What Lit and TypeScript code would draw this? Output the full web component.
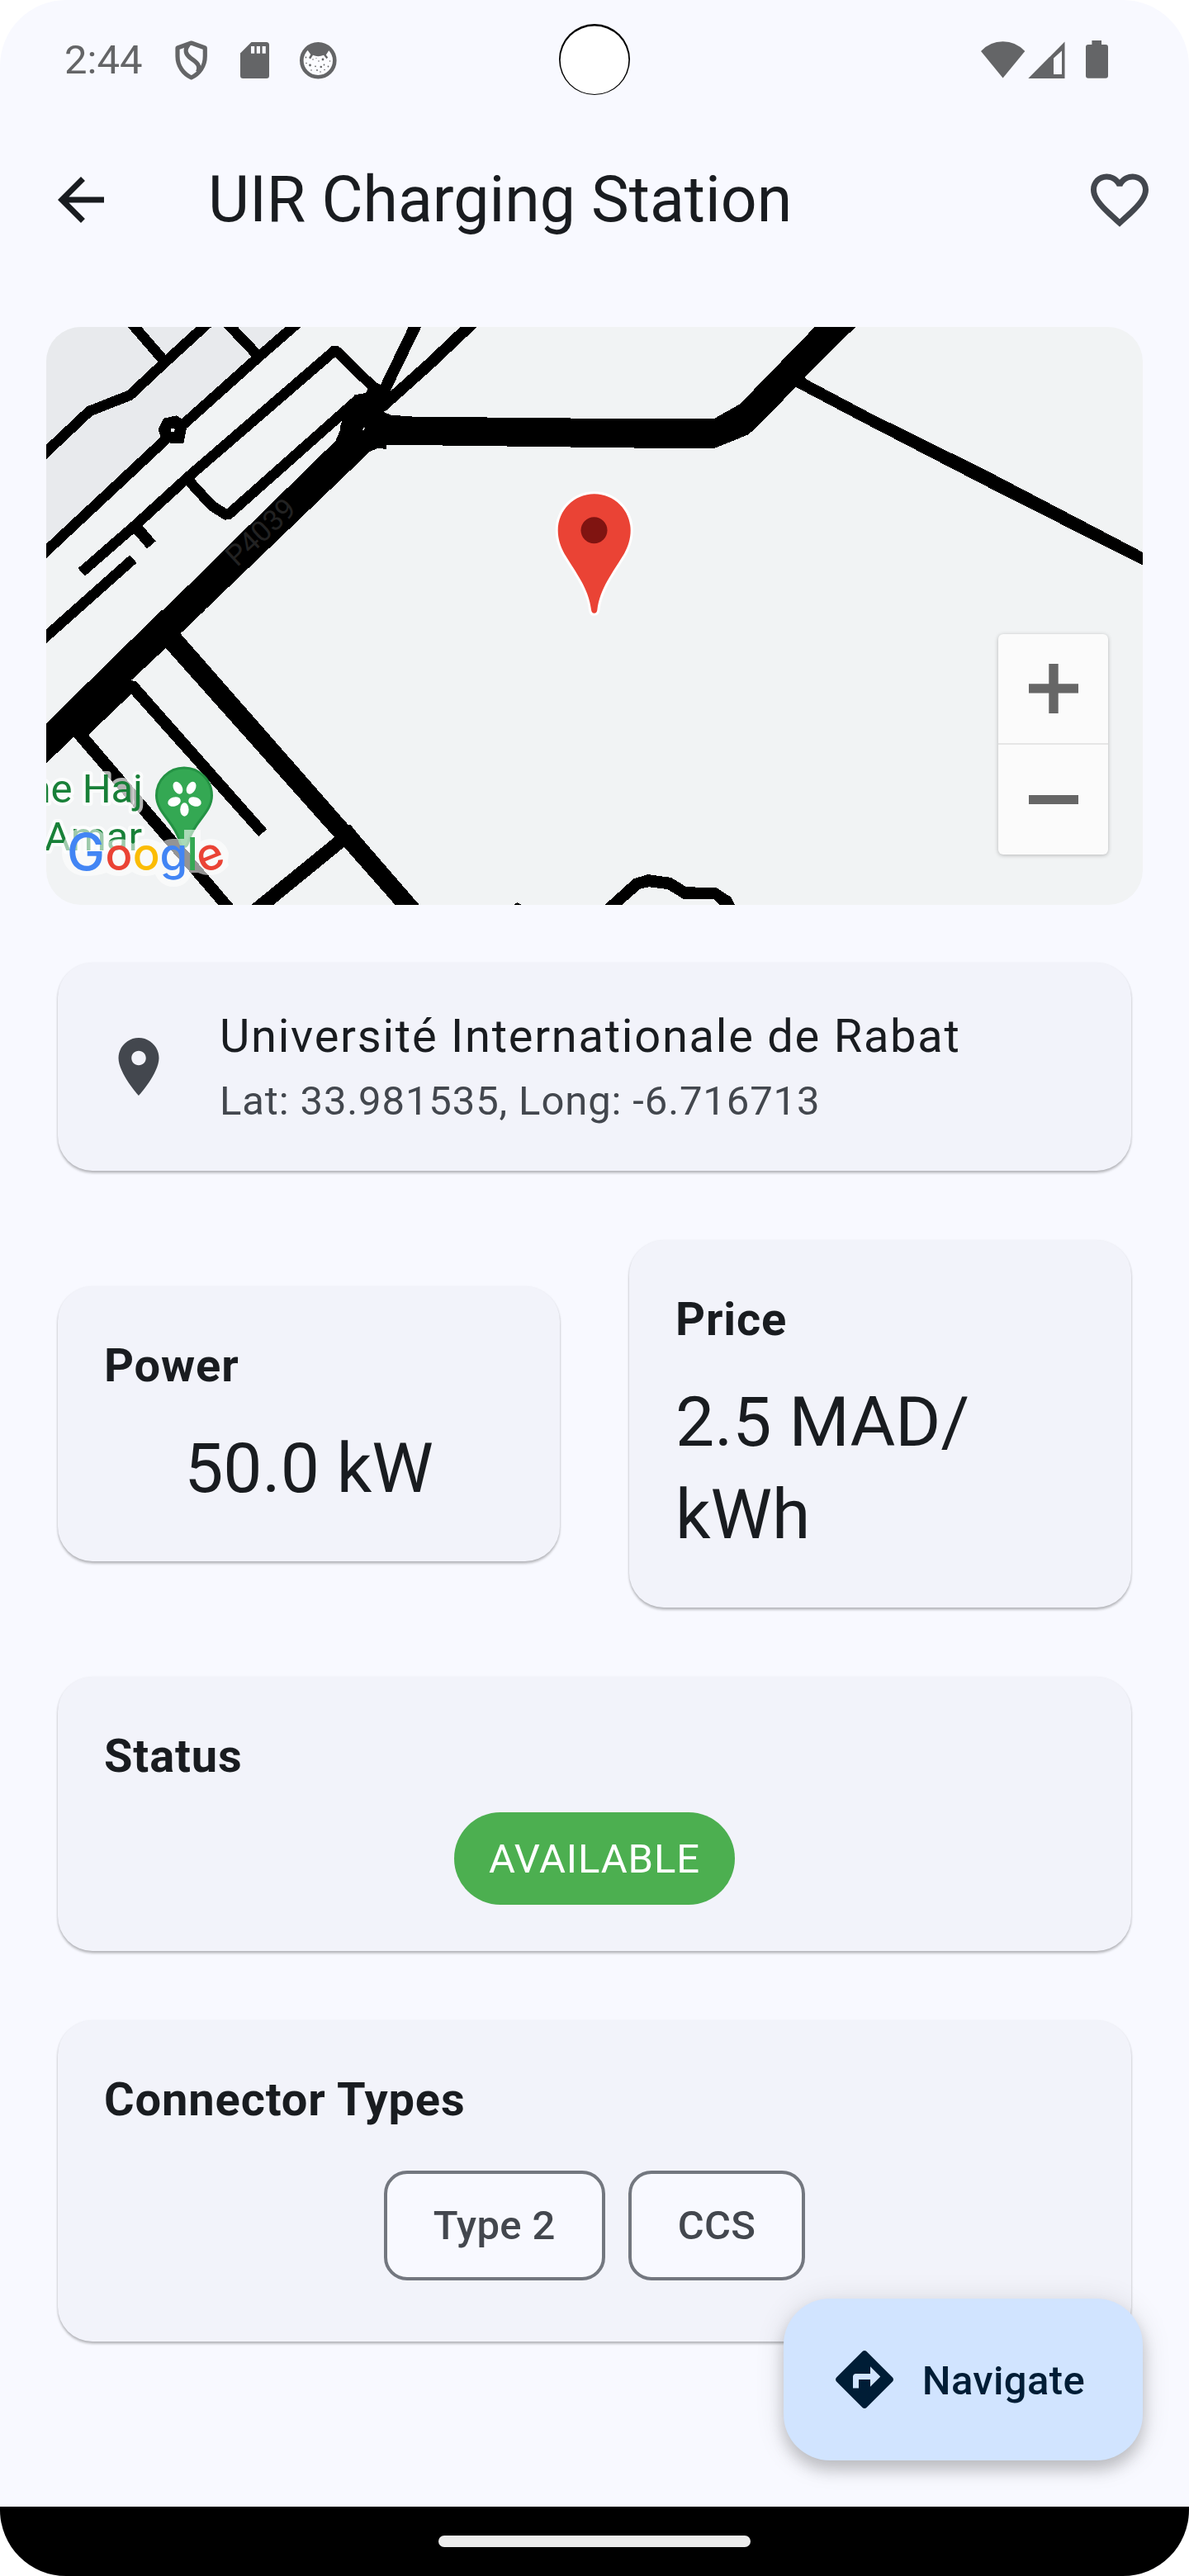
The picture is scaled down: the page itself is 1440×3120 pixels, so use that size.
import { LitElement, html, css } from "lit";
import { customElement, property } from "lit/decorators.js";

const base = css`
  :host {
    display: block;
    box-sizing: border-box;
  }
  *,
  *::before,
  *::after {
    box-sizing: border-box;
  }
  svg {
    display: block;
    flex: none;
  }
`;

@customElement("status-bar")
class StatusBar extends LitElement {
  static styles = [
    base,
    css`
      :host {
        position: relative;
        height: 144px;
      }
      .bar {
        display: flex;
        align-items: center;
        height: 144px;
        padding: 2px 98px 0 78px;
        color: #646567;
      }
      .clock {
        width: 130px;
        font-size: 49px;
        line-height: 58px;
        white-space: nowrap;
      }
      .spacer {
        flex: 1;
      }
      .camera {
        position: absolute;
        left: 677px;
        top: 29px;
      }
    `,
  ];
  render() {
    return html`
      <div class="bar">
        <span class="clock">2:44</span>
        <svg width="200" height="56" viewBox="208 45 200 56" fill="#646567">
          <g fill="none" stroke="#646567" stroke-width="5.2" stroke-linejoin="round">
            <path d="M231.7 52 L248.3 58 V68 C248.3 80.500 241 89.500 231.700 94 C222.400 89.500 215 80.500 215 68 V58 Z" />
            <path d="M228.500 54 C223 60 224.500 66 231 70.500 C239 76 243 79.500 239.500 87" />
          </g>
          <path d="M304.500 51 H322.500 Q326 51 326 54.500 V91.700 Q326 95 322.700 95 H294.300 Q291 95 291 91.700 V64.500 Z" />
          <path d="M304 56h4.200v8.700H304zM310.800 56h4.200v8.700h-4.200zM317.600 56h4.200v8.700h-4.200z" fill="#f8f9ff" />
          <circle cx="385.300" cy="73.300" r="20" fill="#fbfcff" stroke="#646567" stroke-width="4.600" />
          <path d="M372 60 Q378 53 385.300 53 Q392.500 53 399 60 L394.800 66.500 L397.200 69.500 L395.500 71.300 L392 66.800 Q385.300 69.500 379 66.800 L376 71.500 L374 70 L376.300 66 Z" />
          <g>
            <circle cx="375.500" cy="79" r="1.400" /><circle cx="391" cy="72" r="1.400" />
            <circle cx="388.800" cy="81" r="1.300" /><circle cx="382" cy="80.300" r=".9" />
            <circle cx="386" cy="74" r=".8" /><circle cx="379" cy="72" r=".8" />
            <circle cx="392.500" cy="78.500" r=".9" /><circle cx="384" cy="85" r=".9" />
            <circle cx="377" cy="85" r=".8" /><circle cx="388" cy="87" r=".8" />
            <circle cx="370.500" cy="69.500" r=".9" /><circle cx="371" cy="76.500" r=".8" />
            <circle cx="397.500" cy="80.500" r=".9" /><circle cx="399.500" cy="74" r=".8" />
            <circle cx="393" cy="84.500" r=".8" /><circle cx="383" cy="70.500" r=".6" />
          </g>
        </svg>
        <span class="spacer"></span>
        <svg width="156" height="56" viewBox="1186 45 156 56" fill="#646567">
          <path d="M1188 62 Q1199 50.300 1214.600 50.300 Q1230.200 50.300 1241.300 62 L1214.600 94.500 Z" />
          <path d="M1289.500 50.500 V95 H1245.300 Z" />
          <path d="M1286 61.500 V90 H1276 V70.500 Z" fill="#f8f9ff" />
          <path d="M1322.400 49 h11.600 v5 h5 q3 0 3 3 v34.700 q0 3 -3 3 h-21 q-3 0 -3 -3 V57 q0 -3 3 -3 h4.400 Z" />
        </svg>
      </div>
      <svg class="camera" width="86" height="86" viewBox="0 0 86 86">
        <circle cx="43" cy="43" r="43" fill="#000" />
        <circle cx="43" cy="43.800" r="41.300" fill="#fff" />
      </svg>
    `;
  }
}

@customElement("app-header")
class AppHeader extends LitElement {
  static styles = [
    base,
    css`
      .row {
        display: flex;
        align-items: center;
        height: 196px;
        padding: 0 42px 0 56px;
      }
      h1 {
        flex: 1;
        margin: 0 0 0 112px;
        font-size: 77px;
        line-height: 98px;
        font-weight: 400;
        color: #191c20;
        white-space: nowrap;
      }
    `,
  ];
  @property() heading = "";
  render() {
    return html`
      <div class="row">
        <svg width="84" height="84" viewBox="0 0 24 24" fill="#191c20">
          <path d="M20 11H7.83l5.59-5.59L12 4l-8 8 8 8 1.410-1.410L7.830 13H20v-2z" />
        </svg>
        <h1>${this.heading}</h1>
        <svg width="84" height="84" viewBox="0 0 24 24" fill="#43474e">
          <path
            d="M16.500 3c-1.740 0-3.410.810-4.500 2.090C10.910 3.810 9.240 3 7.500 3 4.420 3 2 5.420 2 8.500c0 3.780 3.400 6.860 8.550 11.540L12 21.350l1.450-1.320C18.600 15.360 22 12.280 22 8.500 22 5.420 19.580 3 16.500 3zm-4.400 15.550l-.1.100-.1-.1C7.140 14.240 4 11.390 4 8.500 4 6.500 5.500 5 7.500 5c1.540 0 3.040.990 3.570 2.360h1.870C13.460 5.990 14.960 5 16.500 5c2 0 3.500 1.500 3.500 3.500 0 2.890-3.140 5.740-7.900 10.050z"
          />
        </svg>
      </div>
    `;
  }
}

@customElement("station-map")
class StationMap extends LitElement {
  static styles = [
    base,
    css`
      :host {
        position: relative;
        height: 700px;
        border-radius: 42px;
        overflow: hidden;
        background: #f1f3f4;
      }
      text {
        font-family: Roboto, sans-serif;
      }
      .label text {
        paint-order: stroke;
        stroke: rgba(255, 255, 255, 0.7);
        stroke-width: 8px;
        stroke-linejoin: round;
      }
      .logo text {
        font-family: Inter, Roboto, sans-serif;
        font-weight: 500;
      }
      .zoom {
        position: absolute;
        right: 42px;
        bottom: 61px;
        width: 133px;
        height: 267px;
        display: flex;
        flex-direction: column;
        border-radius: 6px;
        background: #fbfbfb;
        box-shadow: 0 1px 5px rgba(0, 0, 0, 0.25);
      }
      .zoom div {
        flex: 1;
        display: flex;
        align-items: center;
        justify-content: center;
      }
      .zoom div:first-child {
        flex: 0 0 132px;
      }
      .zoom div + div {
        border-top: 2px solid #e6e6e6;
        padding-bottom: 1px;
      }
    `,
  ];
  render() {
    return html`
      <svg width="1328" height="700" viewBox="56 396 1328 700">
        <g transform="translate(40 380) scale(.33333)">
          <path d="M48 48H946L48 862z" fill="#e8eaed" />
          <g shape-rendering="crispEdges">
            <g fill="none" stroke="#000" stroke-width="38" stroke-linejoin="bevel">
              <path d="M30 519L205 354L352 296L465 190L640 30" />
              <path d="M352 28L468 162" />
              <path d="M968 28L820 157L545 403M500 440L30 879" />
              <path d="M699 28L815 150" />
              <path d="M176 939L370 770L565 592L1098 132L1240 270" />
              <path d="M375 776L430 840" stroke-width="42" />
              <path d="M30 1188L364 891" />
              <path d="M560 600L650 698L706 733L1185 308" />
              <path d="M1397 28L1268 295" stroke-width="42" />
              <path d="M1610 22L1440 183L1265 340" stroke-width="42" />
            </g>
            <path d="M475 380L522 370L562 395L547 470H500L465 450L454 420z" />
            <path d="M503 415l13 4-4 11-12-3z" fill="#f1f3f4" />
            <path
              d="M1168 295L1208 288L1235 245L1258 255L1300 285L1275 357L1300 368L1385 374L1445 377V477H1283V492L1255 488L1225 500L535 1162L562 1200H343L410 1140L690 862L1060 500L1098 465L1115 425L1118 400z"
            />
            <path d="M1201 414h6l-6 9h-3z" fill="#f1f3f4" />
          </g>
        </g>
        <g transform="translate(40 740) scale(.35714 .33333)" shape-rendering="crispEdges">
          <path d="M435 -2H582L500 82L450 135L333 252L350 256L333 302L188 450L138 458L45 553V408z" />
          <path
            d="M500 82L1068 776H1076L1103 812L1310 1068H1228L1055 858L815 1068H740L1022 822L450 135z"
          />
          <path d="M333 252L350 256L793 793L765 819L333 302z" />
          <path d="M188 450L680 1068H628L138 458z" />
        </g>
        <g transform="translate(500 380) scale(.57398 .47194)" shape-rendering="crispEdges">
          <path
            d="M0 265L333 267V269H636L690 232L848 34H934L826 163L830 168L965 255L1210 402L1540 612V645L1250 468L945 276L808 188L735 280L708 310L637 345H510L0 337z"
          />
          <path
            d="M405 1517L466 1450L496 1439L545 1447L577 1471L641 1473L672 1498L679 1517H648L634 1502H571L537 1477L498 1471L480 1476L441 1517z"
          />
          <path d="M213 1517L220 1511L229 1517z" />
        </g>
        <text transform="translate(287 687.500) rotate(-43)" font-size="35" fill="#222222">P4039</text>

        <g class="label" font-size="49" fill="#188038" text-anchor="end">
          <text x="173" y="972">ne Haj</text>
          <text x="172" y="1029.500">Amar</text>
        </g>

        <path
          d="M223 930 a33.500 33.500 0 0 1 33.500 33.500 c0 21-22 32-28 55 q-1.500 7-5.500 7 t-5.500-7 c-6-23-28-34-28-55 a33.500 33.500 0 0 1 33.500-33.500z"
          fill="#34a853"
          stroke="#249244"
          stroke-width="3"
        />
        <g fill="#fff">
          <ellipse cx="215.400" cy="954.300" rx="5.200" ry="8" transform="rotate(-28 215.400 954.300)" />
          <ellipse cx="231.600" cy="954.300" rx="5.200" ry="8" transform="rotate(28 231.600 954.300)" />
          <ellipse cx="211" cy="971" rx="5.400" ry="8" transform="rotate(72 211 971)" />
          <ellipse cx="236" cy="971" rx="5.400" ry="8" transform="rotate(-72 236 971)" />
          <ellipse cx="223.400" cy="980.500" rx="5.200" ry="8.300" />
        </g>

        <g fill="#fff" opacity=".58">
          <path d="M223 1005h20v21h-20z" />
          <path
            d="M104 1002c12 0 20 5 25 12l1 6q8-4 14-4 10 0 17 6 7-6 16-6 9 0 17 5 8-5 15-5h14v-11h20v14q6-3 12-3c14 0 20 10 22 17l-1 11 1 4c-6 8-13 12-22 12-8 0-10-1-15-3h-8c-3 10-9 17-22 17-12 0-19-8-22-15q-6 2-11 2-9 0-17-5-7 5-16 5-8 0-15-4-11 4-25 4c-17 0-29-12-29-29s12-30 29-30z"
          />
        </g>
        <g class="logo" font-size="54.500" text-anchor="middle">
          <text x="104" y="1053.500" font-size="61.500" fill="#4285f4">G</text>
          <text x="144" y="1053.500" fill="#ea4335">o</text>
          <text x="177.300" y="1053.500" fill="#fbbc04">o</text>
          <text x="210.500" y="1053.500" fill="#4285f4">g</text>
          <text x="233" y="1053.500" fill="#34a853">l</text>
          <text x="255" y="1053.500" fill="#ea4335" transform="rotate(-22 255 1039)">e</text>
        </g>

        <path
          d="M719.700 598.300 C744 598.300 763.700 618 763.700 642.500 C763.700 653 760.500 662 756 670.500 C742 694 726.500 712 723.300 739 Q722.800 742.700 719.700 742.700 Q716.600 742.700 716.100 739 C713 712 697.500 694 683.500 670.500 C679 662 675.700 653 675.700 642.500 C675.700 618 695.400 598.300 719.700 598.300z"
          fill="#ea4335"
          stroke="#fff"
          stroke-width="6"
          paint-order="stroke"
        />
        <circle cx="719.500" cy="642.200" r="16" fill="#801411" />
      </svg>
      <div class="zoom">
        <div>
          <svg width="60" height="60" viewBox="0 0 60 60" fill="#666">
            <path d="M24.300 0h11.400v24.300H60v11.200H35.700V60H24.300V35.500H0V24.300h24.300z" />
          </svg>
        </div>
        <div>
          <svg width="60" height="11" viewBox="0 0 60 11" fill="#666"><path d="M0 0h60v11H0z" /></svg>
        </div>
      </div>
    `;
  }
}

@customElement("info-card")
class InfoCard extends LitElement {
  static styles = [
    base,
    css`
      :host {
        padding: 56px;
        border-radius: 42px;
        background: #f2f3fa;
        box-shadow: 0 3px 3px rgba(0, 0, 0, 0.2), 0 1px 3px rgba(0, 0, 0, 0.12);
      }
      h2 {
        margin: 0 0 28px;
        font-size: 56px;
        line-height: 80.5px;
        font-weight: 700;
        letter-spacing: 0.875px;
        white-space: nowrap;
      }
      .body {
        display: flex;
        justify-content: center;
      }
    `,
  ];
  @property() heading = "";
  render() {
    return html`
      <h2>${this.heading}</h2>
      <div class="body"><slot></slot></div>
    `;
  }
}

@customElement("app-root")
class AppRoot extends LitElement {
  static styles = [
    base,
    css`
      :host {
        width: 1440px;
        height: 3120px;
        background: #fff;
        font-family: Roboto, sans-serif;
        color: #191c20;
      }
      .screen {
        position: relative;
        display: flex;
        flex-direction: column;
        height: 3120px;
        border-radius: 80px;
        overflow: hidden;
        background: #f8f9ff;
      }
      main {
        flex: 1;
        display: flex;
        flex-direction: column;
        gap: 84px;
        padding: 56px 70px 0;
      }
      station-map {
        margin: 0 -14px -14px;
      }
      .place {
        display: flex;
        align-items: center;
        gap: 56px;
        height: 252px;
        padding: 0 56px;
        border-radius: 42px;
        background: #f2f3fa;
        box-shadow: 0 3px 3px rgba(0, 0, 0, 0.2), 0 1px 3px rgba(0, 0, 0, 0.12);
        white-space: nowrap;
      }
      .name {
        margin-bottom: 3.5px;
        font-size: 56px;
        line-height: 80.5px;
        letter-spacing: 1.75px;
      }
      .coords {
        font-size: 49px;
        line-height: 70px;
        letter-spacing: 0.875px;
        color: #43474e;
      }
      .pair {
        display: grid;
        grid-template-columns: 1fr 1fr;
        align-items: center;
        gap: 84px;
      }
      .value {
        font-size: 84px;
        line-height: 112px;
        white-space: nowrap;
      }
      .fill {
        flex: 1;
      }
      .pill {
        padding: 22px 42px 20px;
        border-radius: 56px;
        background: #4caf50;
        color: #fff;
        font-size: 49px;
        line-height: 70px;
        letter-spacing: 0.875px;
      }
      .chips {
        display: flex;
        gap: 28px;
        padding: 17.5px 0;
      }
      .chip {
        height: 133px;
        padding: 0 56px;
        border: 4px solid #73777f;
        border-radius: 28px;
        background: #f8f9ff;
        color: #43474e;
        font-size: 49px;
        font-weight: 500;
        line-height: 126px;
        letter-spacing: 0.35px;
      }
      .fab {
        position: absolute;
        right: 56px;
        bottom: 140px;
        height: 196px;
        display: flex;
        align-items: center;
        gap: 28px;
        padding: 0 70px 0 56px;
        border-radius: 56px;
        background: #d1e4ff;
        color: #001d36;
        font-size: 49px;
        font-weight: 500;
        letter-spacing: 0.35px;
        box-shadow: 0 12px 18px rgba(0, 0, 0, 0.18), 0 4px 36px rgba(0, 0, 0, 0.12);
      }
      .fab span {
        padding-top: 2px;
      }
      .nav {
        display: flex;
        align-items: center;
        justify-content: center;
        height: 84px;
        background: #000;
      }
      .handle {
        width: 378px;
        height: 14px;
        border-radius: 7px;
        background: #ececec;
      }
    `,
  ];
  render() {
    return html`
      <div class="screen">
        <status-bar></status-bar>
        <app-header heading="UIR Charging Station"></app-header>
        <main>
          <station-map></station-map>
          <section class="place">
            <svg width="84" height="84" viewBox="0 0 24 24" fill="#43474e">
              <path
                d="M12 2C8.130 2 5 5.130 5 9c0 5.250 7 13 7 13s7-7.750 7-13c0-3.870-3.130-7-7-7zm0 9.500c-1.380 0-2.500-1.120-2.500-2.500s1.120-2.500 2.500-2.500 2.500 1.120 2.500 2.500-1.120 2.500-2.500 2.500z"
              />
            </svg>
            <div>
              <div class="name">Université Internationale de Rabat</div>
              <div class="coords">Lat: 33.981535, Long: -6.716713</div>
            </div>
          </section>
          <div class="pair">
            <info-card heading="Power"><div class="value">50.0 kW</div></info-card>
            <info-card heading="Price"><div class="value fill">2.5 MAD/<br />kWh</div></info-card>
          </div>
          <info-card heading="Status"><div class="pill">AVAILABLE</div></info-card>
          <info-card heading="Connector Types">
            <div class="chips">
              ${["Type 2", "CCS"].map((name) => html`<div class="chip">${name}</div>`)}
            </div>
          </info-card>
        </main>
        <div class="fab">
          <svg width="84" height="84" viewBox="0 0 24 24" fill="#001d36">
            <path
              d="M21.710 11.290l-9-9c-.390-.390-1.020-.390-1.410 0l-9 9c-.390.390-.390 1.020 0 1.410l9 9c.390.390 1.020.390 1.410 0l9-9c.390-.380.390-1.010 0-1.410zM14 14.500V12h-4v3H8v-4c0-.550.450-1 1-1h5V7.500l3.500 3.500-3.500 3.500z"
            />
          </svg>
          <span>Navigate</span>
        </div>
        <div class="nav"><div class="handle"></div></div>
      </div>
    `;
  }
}
